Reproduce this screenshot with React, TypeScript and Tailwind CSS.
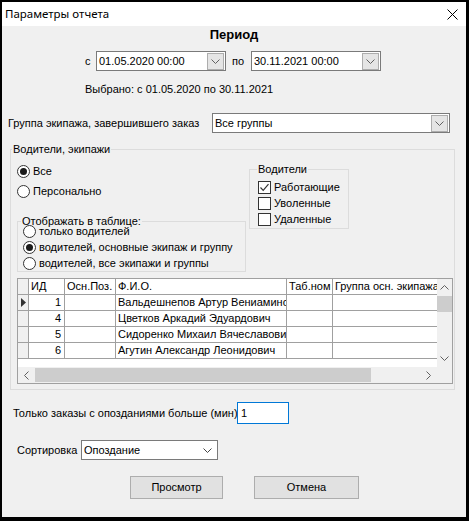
import React from 'react';

const ui = "font-['Liberation_Sans',Arial,sans-serif]";

function Chevron({ color = '#606060' }: { color?: string }) {
  return (
    <svg width="9" height="5" viewBox="0 0 9 5">
      <path d="M0.5 0.5 L4.5 4.5 L8.5 0.5" fill="none" stroke={color} strokeWidth="1" />
    </svg>
  );
}

function DropBtn() {
  return (
    <div className="ml-auto mr-[1px] flex h-[17px] w-[17px] items-center justify-center border border-[#adadad] bg-[#e5e5e5]">
      <Chevron />
    </div>
  );
}

function Radio({ checked, label }: { checked?: boolean; label: string }) {
  return (
    <div className="flex h-[16px] items-center whitespace-nowrap">
      <div className="flex h-[13px] w-[13px] items-center justify-center rounded-full border border-[#333] bg-white">
        {checked && <div className="h-[7px] w-[7px] rounded-full bg-[#1a1a1a]" />}
      </div>
      <span className="ml-[3px]">{label}</span>
    </div>
  );
}

function Check({ checked, label }: { checked?: boolean; label: string }) {
  return (
    <div className="flex h-[16px] items-center whitespace-nowrap">
      <div className="flex h-[13px] w-[13px] items-center justify-center border border-[#333] bg-white">
        {checked && (
          <svg width="11" height="11" viewBox="0 0 11 11">
            <path d="M1.5 5.5 L4.2 8.3 L9.5 2.2" fill="none" stroke="#333" strokeWidth="1.2" />
          </svg>
        )}
      </div>
      <span className="ml-[3px]">{label}</span>
    </div>
  );
}

const rows = [
  { id: 1, name: 'Вальдешнепов Артур Вениаминович' },
  { id: 4, name: 'Цветков Аркадий Эдуардович' },
  { id: 5, name: 'Сидоренко Михаил Вячеславович' },
  { id: 6, name: 'Агутин Александр Леонидович' },
];

const cols = ['w-[36px]', 'w-[51px]', 'w-[171px]', 'w-[46px]', 'w-[104px]'];

function Grid() {
  return (
    <div className="ml-[6px] mt-[6px] w-[436px] border border-[#a0a0a0] bg-white">
      <div className="flex h-[88px]">
        <div className="w-[419px] overflow-hidden">
          <div className="flex h-[16px] border-b border-[#a0a0a0] leading-[15px]">
            <div className="w-[11px] shrink-0 border-r border-[#a0a0a0] bg-[#f0f0f0]" />
            {['ИД', 'Осн.Поз.', 'Ф.И.О.', 'Таб.ном', 'Группа осн. экипажа'].map((h, i) => (
              <div
                key={h}
                className={`${cols[i]} shrink-0 overflow-hidden whitespace-nowrap pl-[2px] ${i < 4 ? 'border-r border-[#a0a0a0]' : ''}`}
              >
                {h}
              </div>
            ))}
          </div>
          {rows.map((r, ri) => (
            <div key={r.id} className="flex h-[16px] border-b border-[#a0a0a0] leading-[15px]">
              <div className="flex w-[11px] shrink-0 items-center justify-center border-r border-[#a0a0a0] bg-[#f0f0f0]">
                {ri === 0 && (
                  <svg width="5" height="9" viewBox="0 0 5 9">
                    <path d="M0 0 L5 4.5 L0 9 Z" fill="#333" />
                  </svg>
                )}
              </div>
              <div className={`${cols[0]} shrink-0 border-r border-[#a0a0a0] pr-[3px] text-right`}>{r.id}</div>
              <div className={`${cols[1]} shrink-0 border-r border-[#a0a0a0]`} />
              <div className={`${cols[2]} shrink-0 overflow-hidden whitespace-nowrap border-r border-[#a0a0a0] pl-[2px]`}>
                {r.name}
              </div>
              <div className={`${cols[3]} shrink-0 border-r border-[#a0a0a0]`} />
              <div className={`${cols[4]} shrink-0`} />
            </div>
          ))}
        </div>
        <div className="flex w-[15px] flex-col items-center bg-[#f0f0f0]">
          <div className="flex h-[17px] items-center justify-center">
            <div className="rotate-180">
              <Chevron />
            </div>
          </div>
          <div className="h-[16px] w-[15px] bg-[#cdcdcd]" />
          <div className="flex-1" />
          <div className="flex h-[17px] items-center justify-center">
            <Chevron />
          </div>
        </div>
      </div>
      <div className="flex h-[16px] bg-[#f0f0f0]">
        <div className="flex w-[17px] items-center justify-center">
          <div className="rotate-90">
            <Chevron />
          </div>
        </div>
        <div className="my-[1px] w-[336px] bg-[#cdcdcd]" />
        <div className="flex-1" />
        <div className="flex w-[17px] items-center justify-center">
          <div className="-rotate-90">
            <Chevron />
          </div>
        </div>
        <div className="w-[15px]" />
      </div>
    </div>
  );
}

export default function App() {
  return (
    <div className={`${ui} h-[521px] w-[469px] bg-black pb-[4px] pl-[2px] pr-[3px] pt-[2px] text-[11px] text-black`}>
      <div className="flex h-full flex-col">
        <div className="flex h-[24px] items-center bg-white pl-[3px] pr-[8px] font-['Noto_Sans',sans-serif] text-[11.5px]">
          <span>Параметры отчета</span>
          <svg className="ml-auto" width="11" height="11" viewBox="0 0 11 11">
            <path d="M0.5 0.5 L10.5 10.5 M10.5 0.5 L0.5 10.5" stroke="#000" strokeWidth="1" />
          </svg>
        </div>
        <div className="flex-1 bg-[#f0f0f0]">
          <div className="h-[18px] text-center text-[13px] font-bold leading-[18px]">Период</div>

          <div className="mt-[7px] flex h-[20px] items-center">
            <span className="ml-[83px] w-[11px]">с</span>
            <div className="flex h-[20px] w-[130px] items-center border border-[#7a7a7a] bg-white pl-[2px]">
              <span>01.05.2020 00:00</span>
              <DropBtn />
            </div>
            <span className="w-[25px] pl-[6px]">по</span>
            <div className="flex h-[20px] w-[130px] items-center border border-[#7a7a7a] bg-white pl-[2px]">
              <span>30.11.2021 00:00</span>
              <DropBtn />
            </div>
          </div>

          <div className="mt-[10px] h-[16px] pl-[83px] leading-[16px]">Выбрано: с 01.05.2020 по 30.11.2021</div>

          <div className="mt-[16px] flex h-[20px] items-center">
            <span className="w-[210px] whitespace-nowrap pl-[6px]">Группа экипажа, завершившего заказ</span>
            <div className="flex h-[20px] w-[238px] items-center border border-[#7a7a7a] bg-white pl-[2px]">
              <span>Все группы</span>
              <DropBtn />
            </div>
          </div>

          <fieldset className="ml-[8px] mt-[9px] h-[248px] w-[445px] border border-[#dcdcdc]">
            <legend className="ml-[1px] px-[1px] leading-[14px]">Водители, экипажи</legend>
            <div className="flex">
              <div className="w-[238px] pl-[6px]">
                <div className="mt-[7px]">
                  <Radio checked label="Все" />
                </div>
                <div className="mt-[4px]">
                  <Radio label="Персонально" />
                </div>
                <fieldset className="mt-[16px] w-[229px] border border-[#dcdcdc] pl-[5px]">
                  <legend className="ml-[-2px] whitespace-nowrap px-[1px] leading-[12px]">Отображать в таблице:</legend>
                  <div className="-mt-[4px]">
                    <Radio label="только водителей" />
                    <Radio checked label="водителей, основные экипаж и группу" />
                    <Radio label="водителей, все экипажи и группы" />
                  </div>
                </fieldset>
              </div>
              <fieldset className="mt-[7px] h-[66px] w-[100px] self-start border border-[#dcdcdc] pl-[8px]">
                <legend className="-ml-[1px] px-[1px] leading-[12px]">Водители</legend>
                <div className="mt-[4px]">
                  <Check checked label="Работающие" />
                  <Check label="Уволенные" />
                  <Check label="Удаленные" />
                </div>
              </fieldset>
            </div>
            <Grid />
          </fieldset>

          <div className="mt-[12px] flex h-[22px] items-center">
            <span className="w-[235px] whitespace-nowrap pl-[11px]">Только заказы с опозданиями больше (мин)</span>
            <div className="flex h-[22px] w-[52px] items-center border border-[#0078d7] bg-white pl-[3px]">1</div>
          </div>

          <div className="mt-[16px] flex h-[20px] items-center">
            <span className="w-[79px] pl-[15px]">Сортировка</span>
            <div className="flex h-[20px] w-[137px] items-center border border-[#7a7a7a] bg-white pl-[2px] pr-[5px]">
              <span>Опоздание</span>
              <div className="ml-auto">
                <Chevron color="#444" />
              </div>
            </div>
          </div>

          <div className="mt-[16px] flex h-[23px] pl-[128px]">
            <button className="h-[23px] w-[93px] border border-[#adadad] bg-[#e1e1e1]">Просмотр</button>
            <button className="ml-[31px] h-[23px] w-[105px] border border-[#adadad] bg-[#e1e1e1]">Отмена</button>
          </div>
        </div>
      </div>
    </div>
  );
}
